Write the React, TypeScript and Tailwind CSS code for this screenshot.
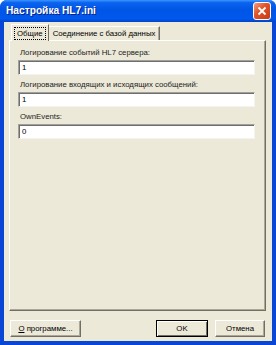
export default function App() {
  const font = { fontFamily: '"Liberation Sans", Arial, sans-serif' };
  return (
    <div className="w-[276px] h-[345px] flex flex-col bg-[#0a46d6] rounded-t-[7px] overflow-hidden" style={font}>
      {/* title bar */}
      <div className="h-[22px] shrink-0 flex items-center justify-between pl-[6px] pr-[5px] bg-[linear-gradient(to_bottom,#3d95ff_0%,#0a64ef_12%,#0055e5_45%,#0058ee_85%,#0044c8_100%)]">
        <span className="text-white font-bold text-[10.2px] leading-none whitespace-nowrap [text-shadow:1px_1px_#0a1f80]">Настройка HL7.ini</span>
        <div className="w-[18px] h-[18px] rounded-[3px] border border-white bg-[linear-gradient(135deg,#f0a080_0%,#e2562c_40%,#c83a12_100%)] flex items-center justify-center">
          <svg width="10" height="10" viewBox="0 0 10 10">
            <path d="M1.5 1.5 L8.5 8.5 M8.5 1.5 L1.5 8.5" stroke="white" strokeWidth="1.8" />
          </svg>
        </div>
      </div>
      {/* client */}
      <div className="flex-1 mx-[4px] mb-[4px] bg-[#ece9d8] flex flex-col">
        {/* tabs */}
        <div className="flex items-end h-[18px] pl-[7px]">
          <div className="relative z-10 h-[17px] px-[3px] flex items-center border-t border-l border-white border-r border-r-[#716f64] bg-[#ece9d8] -mb-px">
            <span className="text-[7.8px] leading-[11px] text-black px-[2px] whitespace-nowrap outline outline-1 outline-dotted outline-black">Общие</span>
          </div>
          <div className="h-[14px] px-[4px] flex items-center border-t border-white border-r border-r-[#716f64] shadow-[inset_-1px_0_#aca899]">
            <span className="text-[7.8px] leading-[11px] text-black whitespace-nowrap">Соединение с базой данных</span>
          </div>
        </div>
        {/* panel */}
        <div className="ml-[5px] mr-[6px] h-[271px] border-t border-l border-white border-r border-b border-r-[#716f64] border-b-[#716f64] shadow-[inset_-1px_-1px_#aca899] pt-[5px] pl-[8px] pr-[10px] flex flex-col">
          {[
            { label: 'Логирование событий HL7 сервера:', value: '1' },
            { label: 'Логирование входящих и исходящих сообщений:', value: '1' },
            { label: 'OwnEvents:', value: '0' },
          ].map((f) => (
            <div key={f.label} className="flex flex-col mb-[3px]">
              <div className="text-[7.8px] leading-[13px] text-[#222] pl-[2px] mb-[1px] whitespace-nowrap">{f.label}</div>
              <div className="h-[15px] bg-white border-t border-l border-[#a0a0a0] border-r border-b border-r-[#f4f3ee] border-b-[#f4f3ee] shadow-[inset_1px_1px_#6e6e6e] flex items-center pl-[3px]">
                <span className="text-[7.8px] leading-[11px] text-black">{f.value}</span>
              </div>
            </div>
          ))}
        </div>
        {/* buttons */}
        <div className="flex items-center mt-[9px] pl-[6px] pr-[7px]">
          <div className="w-[71px] h-[17px] border-t border-l border-white border-r border-b border-r-[#716f64] border-b-[#716f64] shadow-[inset_-1px_-1px_#aca899] flex items-center justify-center">
            <span className="text-[7.8px] leading-[11px] text-black whitespace-nowrap"><span className="underline">О</span> программе...</span>
          </div>
          <div className="flex-1" />
          <div className="w-[52px] h-[17px] border border-black shadow-[inset_1px_1px_white,inset_-1px_-1px_#716f64] flex items-center justify-center">
            <span className="text-[7.8px] leading-[11px] text-black">OK</span>
          </div>
          <div className="w-[50px] ml-[7px] h-[17px] border-t border-l border-white border-r border-b border-r-[#716f64] border-b-[#716f64] shadow-[inset_-1px_-1px_#aca899] flex items-center justify-center">
            <span className="text-[7.8px] leading-[11px] text-black whitespace-nowrap">Отмена</span>
          </div>
        </div>
      </div>
    </div>
  );
}
